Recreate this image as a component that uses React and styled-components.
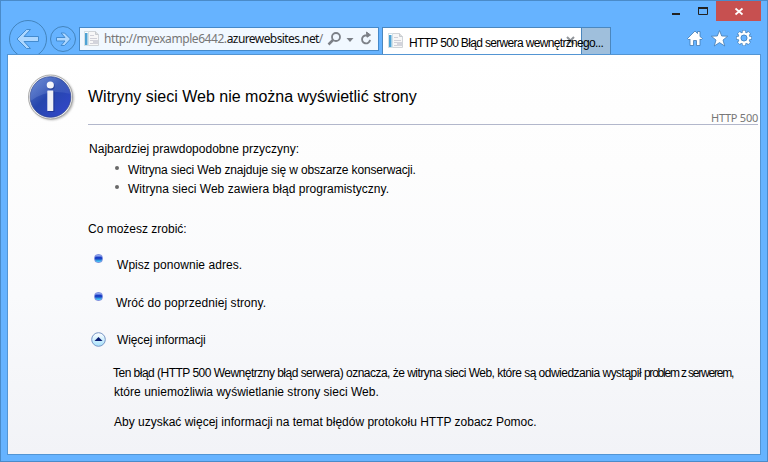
import React from 'react';
import styled, { createGlobalStyle } from 'styled-components';

const Global = createGlobalStyle`
  * { box-sizing: border-box; }
  html, body { margin: 0; padding: 0; overflow: hidden; }
  svg { display: block; flex: none; }
`;

const Window = styled.div`
  width: 768px;
  height: 462px;
  display: flex;
  flex-direction: column;
  background: #66b3ff;
  border: 1px solid #4a8bc9;
  padding: 0 6px 6px;
  font-family: 'Liberation Sans', Arial, sans-serif;
  color: #000;
`;

const TitleBar = styled.header`
  display: flex;
  justify-content: flex-end;
  height: 20px;
`;

const CaptionButton = styled.div`
  width: ${(p) => p.$width}px;
  height: 20px;
  background: ${(p) => (p.$danger ? '#c75050' : 'transparent')};
`;

const Toolbar = styled.div`
  display: flex;
  align-items: flex-start;
  height: 33px;
`;

const NavButtons = styled.div`
  width: 72px;
  height: 34px;
  margin-top: -1px;
`;

const AddressBar = styled.div`
  display: flex;
  align-items: center;
  width: 300px;
  height: 24px;
  margin-top: 6px;
  padding-left: 3px;
  border: 1px solid #4589c9;
  background: #f1f8ff;
`;

const Url = styled.div`
  width: 222px;
  margin-left: 3px;
  white-space: pre;
  font: 12px/20px 'Noto Sans', sans-serif;
  letter-spacing: ${(p) => p.$spacing}px;
  color: #777;
`;

const Host = styled.span`
  color: #111;
  letter-spacing: ${(p) => p.$spacing}px;
`;

const Tab = styled.div`
  display: flex;
  align-items: flex-start;
  position: relative;
  width: 200px;
  height: 27px;
  margin: 6px 0 0 3px;
  padding: 4px 0 0 4px;
  background: #fff;
  border: 1px solid #4b87be;
  border-bottom: 0;
`;

const TabTitle = styled.div`
  position: relative;
  z-index: 1;
  margin-left: 4px;
  white-space: pre;
  font-size: 12px;
  line-height: 22px;
  letter-spacing: ${(p) => p.$spacing}px;
`;

const TabClose = styled.div`
  position: absolute;
  left: 183px;
  top: 8px;
`;

const NewTab = styled.div`
  width: 29px;
  height: 27px;
  margin-top: 6px;
  background: #9fbfdc;
  border: solid #4b87be;
  border-width: 1px 1px 0 0;
`;

const Tools = styled.div`
  display: flex;
  margin: 8px 9px 0 auto;
`;

const Page = styled.main`
  flex: 1;
  padding: 0 2px 0 20px;
  border: 1px solid #5395d3;
  background: linear-gradient(#fff 0%, #fdfdfd 28%, #f9fafc 60%, #f2f3f7 100%);
`;

const Heading = styled.div`
  display: flex;
  height: 70px;
`;

const InfoSlot = styled.div`
  width: 60px;
  padding-top: 18px;
`;

const HeadingText = styled.div`
  display: flex;
  flex-direction: column;
  justify-content: space-between;
  flex: 1;
  border-bottom: 1px solid #b2b7cb;
`;

const Title = styled.h1`
  margin: 30px 0 0;
  font-size: 16px;
  line-height: 24px;
  font-weight: 400;
`;

const Status = styled.div`
  align-self: flex-end;
  font: 11px/13px 'Noto Sans', sans-serif;
  letter-spacing: ${(p) => p.$spacing}px;
  color: #777;
`;

const Line = styled.div`
  display: flex;
  margin-top: ${(p) => p.$gap}px;
  padding-left: ${(p) => p.$indent}px;
  white-space: pre;
  font-size: 12px;
  line-height: 18px;
  height: 18px;
  letter-spacing: ${(p) => p.$spacing}px;
`;

const Tight = styled.span`
  letter-spacing: ${(p) => p.$spacing}px;
`;

const Marker = styled.div`
  width: ${(p) => p.$width}px;
  height: 18px;
  padding-top: ${(p) => p.$drop}px;
  flex: none;
`;

const Dot = styled.div`
  width: 4px;
  height: 4px;
  border-radius: 50%;
  background: #686868;
`;

const Ball = styled.div`
  width: 9px;
  height: 9px;
  margin-top: -2px;
  border-radius: 4px;
  border: 1px solid #8292df;
  background: linear-gradient(#8fa6ee 0 15%, #1738c5 30%, #1944c4 55%, #42c8f3 90%);
`;

const PageIcon = () => (
  <svg width="18" height="18" viewBox="0 0 18 18">
    <path d="M5.5 1.5h7l3 3v11h-10z" fill="#f7f7f7" stroke="#d0d4d8" />
    <path d="M12.5 1.5v3h3" fill="#ddd" stroke="#c6cbd0" />
    <path d="M7 5.500h4M7 8.500h7M7 10.500h3M7 13.500h3" stroke="#d0d0d8" />
    <rect x="10" y="10" width="5" height="4" fill="#d3d4dc" />
    <rect x="1.5" y="1.5" width="4" height="14" fill="#fff" stroke="#d3e0e6" />
    <rect x="2" y="3" width="2.5" height="12" fill="#4da2d4" />
  </svg>
);

const NavIcons = () => (
  <svg width="72" height="34" viewBox="7 20 72 34">
    <g fill="none" stroke="#4384bd" strokeWidth="1">
      <circle cx="28" cy="39" r="18.5" />
      <circle cx="63" cy="39" r="12.5" />
    </g>
    <g fill="#add7ff" stroke="#438bcf" strokeLinejoin="round">
      <path d="M17 39 26.500 29.500h4L24 36.500h14.500v5H24l6.500 7h-4z" />
      <path d="M70.500 39 64.500 33h-3.500l4 4.500h-8.500v3.500H65l-4 4.500h3.500z" />
    </g>
  </svg>
);

const AddressIcons = () => (
  <svg width="49" height="22" viewBox="0 0 49 22">
    <g fill="none" stroke="#7c8087">
      <circle cx="10" cy="9" r="4" strokeWidth="1.8" />
      <path d="M7 12 2.500 16.500" strokeWidth="2.500" />
      <path d="M42.300 8.100A4 4 0 1 0 44 11.800" strokeWidth="1.900" />
    </g>
    <path d="M20.500 10h7l-3.500 4z" fill="#7c8087" />
    <path d="M41 9.200 44.500 7 40.500 4z" fill="#7c8087" stroke="#7c8087" />
  </svg>
);

const InfoIcon = () => (
  <svg width="50" height="50" viewBox="0 0 50 50">
    <defs>
      <linearGradient id="blue" x1="0" y1="0" x2="1" y2="1">
        <stop offset="0" stopColor="#587bcc" />
        <stop offset=".45" stopColor="#2646ad" />
        <stop offset="1" stopColor="#3347ce" />
      </linearGradient>
      <linearGradient id="shine" x1="0" y1="0" x2="1" y2="1">
        <stop offset="0" stopColor="#a5bdf0" stopOpacity=".3" />
        <stop offset="1" stopColor="#a5bdf0" stopOpacity=".08" />
      </linearGradient>
      <filter id="shade" x="-20%" y="-20%" width="140%" height="140%">
        <feGaussianBlur stdDeviation="1.2" />
      </filter>
    </defs>
    <circle cx="23.700" cy="25" r="22" fill="#777" opacity=".6" filter="url(#shade)" />
    <circle cx="22.500" cy="24" r="22" fill="#f0f0f0" stroke="#999" strokeWidth=".8" />
    <circle cx="22.500" cy="24" r="20.300" fill="url(#blue)" stroke="#29418e" strokeWidth=".7" />
    <path d="M2.500 28A20 20 0 0 1 42.500 21Q20 15 2.500 28" fill="url(#shine)" />
    <circle cx="23" cy="13" r="3.800" fill="#14277a" opacity=".5" />
    <rect x="20" y="18" width="6.500" height="21" fill="#14277a" opacity=".5" />
    <circle cx="22.300" cy="12" r="3.600" fill="#f5f6fa" />
    <rect x="19.300" y="17.500" width="6" height="20.500" rx=".5" fill="#f0f1f6" />
  </svg>
);

const ToolIcons = () => (
  <svg width="65" height="20" viewBox="687 29 65 20">
    <g fill="#fff" stroke="#427bb2" strokeWidth=".8" strokeLinejoin="round">
      <path d="M687.500 38.500 695 31l2.500 2.500v-2h2.500v5l2.500 2-1.500 1.500-1-1v6.500h-3.500v-5h-3v5H690V39l-1 1z" />
      <path d="m719.500 30.500 2.200 5.500 6 .2-4.700 3.800 1.700 6-5.200-3.400-5.200 3.400 1.700-6-4.700-3.800 6-.2z" />
    </g>
    <g transform="translate(744 38)">
      <g stroke="#427bb2" strokeWidth="4">
        <path d="M0-7.600V7.600M-7.600 0H7.600M-5.500-5.500 5.500 5.500M5.500-5.500-5.500 5.500" />
      </g>
      <circle r="5.900" fill="#427bb2" />
      <g stroke="#fff" strokeWidth="2.700">
        <path d="M0-7.200V7.200M-7.200 0H7.200M-5.200-5.200 5.200 5.200M5.200-5.200-5.200 5.200" />
      </g>
      <circle r="4.400" fill="#66b3ff" stroke="#fff" strokeWidth="2.300" />
      <circle r="3" fill="#66b3ff" stroke="#427bb2" strokeWidth=".7" />
    </g>
  </svg>
);

const UpIcon = () => (
  <svg width="16" height="16" viewBox="0 0 16 16">
    <defs>
      <linearGradient id="up" x1="0" y1="0" x2="0" y2="1">
        <stop offset="0" stopColor="#fff" />
        <stop offset="1" stopColor="#a5e0fa" />
      </linearGradient>
    </defs>
    <circle cx="7.500" cy="8.500" r="6.800" fill="url(#up)" stroke="#7796c6" />
    <path d="M3.500 10h8l-4-4z" fill="#081b70" />
  </svg>
);

export default function App() {
  return (
    <Window>
      <Global />
      <TitleBar>
        <CaptionButton $width={24}>
          <svg width="24" height="20"><rect x="1" y="12" width="8" height="2" fill="#222" /></svg>
        </CaptionButton>
        <CaptionButton $width={21}>
          <svg width="21" height="20">
            <path d="M3.500 6.500h9v7h-9z" fill="none" stroke="#222" />
            <rect x="3" y="6" width="10" height="2" fill="#222" />
          </svg>
        </CaptionButton>
        <CaptionButton $width={45} $danger>
          <svg width="45" height="20"><path d="m19.500 7.500 7 6m0-6-7 6" stroke="#fff" strokeWidth="1.700" /></svg>
        </CaptionButton>
      </TitleBar>
      <Toolbar>
        <NavButtons><NavIcons /></NavButtons>
        <AddressBar>
          <PageIcon />
          <Url $spacing={-0.43}>http://myexample6442.<Host $spacing={-0.58}>azurewebsites.net</Host>/</Url>
          <AddressIcons />
        </AddressBar>
        <Tab>
          <PageIcon />
          <TabTitle $spacing={-0.66}>HTTP 500 Błąd serwera wewnętrznego...</TabTitle>
          <TabClose>
            <svg width="9" height="9"><path d="m1 1 7 7m0-7-7 7" stroke="#91959a" strokeWidth="2" /></svg>
          </TabClose>
        </Tab>
        <NewTab />
        <Tools><ToolIcons /></Tools>
      </Toolbar>
      <Page>
        <Heading>
          <InfoSlot><InfoIcon /></InfoSlot>
          <HeadingText>
            <Title>Witryny sieci Web nie można wyświetlić strony</Title>
            <Status $spacing={-0.25}>HTTP 500</Status>
          </HeadingText>
        </Heading>
        <Line $gap={15} $indent={61} $spacing={0.02}>Najbardziej prawdopodobne przyczyny:</Line>
        <Line $gap={3} $indent={87} $spacing={-0.15}>
          <Marker $width={13} $drop={5}><Dot /></Marker>Witryna sieci Web znajduje się w obszarze konserwacji.
        </Line>
        <Line $gap={1} $indent={87} $spacing={0.03}>
          <Marker $width={13} $drop={5}><Dot /></Marker>Witryna sieci Web zawiera błąd programistyczny.
        </Line>
        <Line $gap={22} $indent={60} $spacing={0}>Co możesz zrobić:</Line>
        <Line $gap={18} $indent={66} $spacing={0.05}>
          <Marker $width={23} $drop={0}><Ball /></Marker>Wpisz ponownie adres.
        </Line>
        <Line $gap={20} $indent={66} $spacing={0.07}>
          <Marker $width={22} $drop={0}><Ball /></Marker>Wróć do poprzedniej strony.
        </Line>
        <Line $gap={19} $indent={63} $spacing={-0.12}>
          <Marker $width={26} $drop={0}><UpIcon /></Marker>Więcej informacji
        </Line>
        <Line $gap={15} $indent={85} $spacing={-0.515}>
          Ten błąd (HTTP 500 Wewnętrzny błąd serwera) oznacza, że witryna sieci Web, które są odwiedzania wystąpił{' '}
          <Tight $spacing={-1.2}>problem z serwerem,</Tight>
        </Line>
        <Line $gap={1} $indent={86} $spacing={0.02}>które uniemożliwia wyświetlanie strony sieci Web.</Line>
        <Line $gap={12} $indent={86} $spacing={0}>Aby uzyskać więcej informacji na temat błędów protokołu HTTP zobacz Pomoc.</Line>
      </Page>
    </Window>
  );
}
